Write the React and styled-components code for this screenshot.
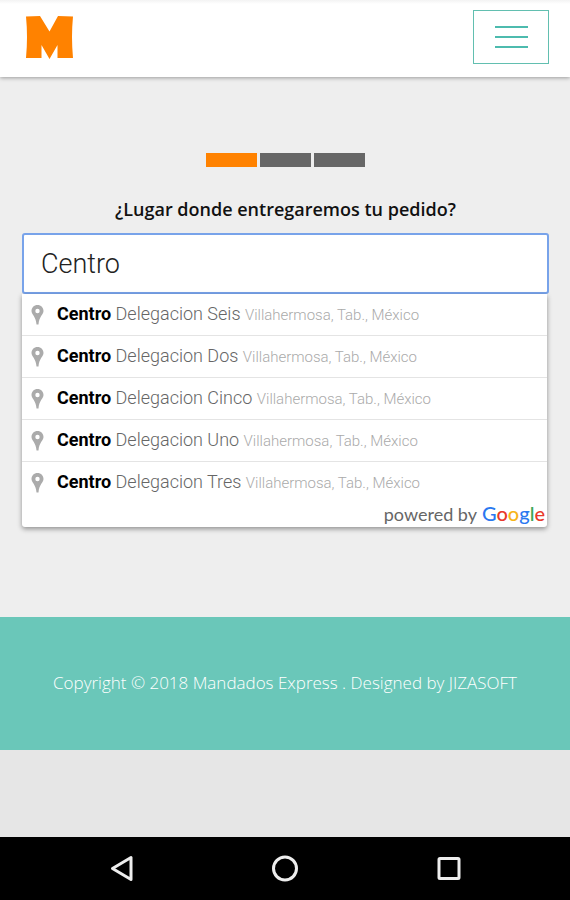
import React, { useState } from "react";
import styled, { createGlobalStyle } from "styled-components";

const places = [
    { id: 1, name: "Delegacion Seis", region: "Villahermosa, Tab., México" },
    { id: 2, name: "Delegacion Dos", region: "Villahermosa, Tab., México" },
    { id: 3, name: "Delegacion Cinco", region: "Villahermosa, Tab., México" },
    { id: 4, name: "Delegacion Uno", region: "Villahermosa, Tab., México" },
    { id: 5, name: "Delegacion Tres", region: "Villahermosa, Tab., México" }
];

const googleLetters = [
    ["G", "#2a78f0"],
    ["o", "#e8392b"],
    ["o", "#f7b518"],
    ["g", "#2a78f0"],
    ["l", "#3aa757"],
    ["e", "#e8392b"]
];

const steps = [1, 2, 3];

const Logo = () => (
    <svg width="48" height="44" viewBox="0 0 48 44" aria-hidden="true">
        <path
            d="M1 1.500L15 1L24.500 16.500L33 1L48 1.500Q47 12 47 22T48 43L32.500 43V30L24.500 44L16.500 30V43L1 43Q2 32 2 22T1 1.500Z"
            fill="#ff8200"
        />
    </svg>
);

const Pin = () => (
    <svg width="13" height="20" viewBox="0 0 13 20" aria-hidden="true">
        <path
            d="M6.500 0C2.900 0 0.500 2.700 0.500 6C0.500 9.500 5 11.500 5.500 19.500H7.500C8 11.500 12.500 9.500 12.500 6C12.500 2.700 10.100 0 6.500 0ZM6.500 3.800A2.200 2.200 0 1 1 6.500 8.200A2.200 2.200 0 1 1 6.500 3.800Z"
            fill="#ababab"
            fillRule="evenodd"
        />
    </svg>
);

const App = () => {
    const [query, setQuery] = useState("Centro");
    const currentStep = 1;

    return <Page>
        <GlobalStyle />
        <Header>
            <LogoLink href="#" aria-label="Mandados Express"><Logo /></LogoLink>
            <MenuButton type="button" aria-label="Menu">
                <MenuLine />
                <MenuLine />
                <MenuLine />
            </MenuButton>
        </Header>
        <Main>
            <Steps>
                {steps.map(step => <Step key={step} $active={step === currentStep} />)}
            </Steps>
            <Question htmlFor="place">¿Lugar donde entregaremos tu pedido?</Question>
            <PlaceInput
                id="place"
                type="text"
                autoComplete="off"
                value={query}
                onChange={e => setQuery(e.target.value)}
            />
            <Suggestions>
                <PlaceList>
                    {places.map(place => (
                        <PlaceItem key={place.id}>
                            <PlaceButton type="button">
                                <Pin />
                                <PlaceText>
                                    <b>Centro</b> {place.name} <small>{place.region}</small>
                                </PlaceText>
                            </PlaceButton>
                        </PlaceItem>
                    ))}
                </PlaceList>
                <PoweredBy>
                    powered by
                    <Google>
                        {googleLetters.map(([letter, color], index) => (
                            <Letter key={index} $color={color}>{letter}</Letter>
                        ))}
                    </Google>
                </PoweredBy>
            </Suggestions>
        </Main>
        <Footer>Copyright © 2018 Mandados Express . Designed by JIZASOFT</Footer>
        <SystemBar>
            <SystemButton type="button" aria-label="Back">
                <svg width="28" height="28" viewBox="0 0 28 28">
                    <path d="M24 2.500V24.500L5.500 13.500Z" />
                </svg>
            </SystemButton>
            <SystemButton type="button" aria-label="Home">
                <svg width="28" height="28" viewBox="0 0 28 28">
                    <circle cx="14" cy="13.500" r="11.500" />
                </svg>
            </SystemButton>
            <SystemButton type="button" aria-label="Recent apps">
                <svg width="28" height="28" viewBox="0 0 28 28">
                    <rect x="4" y="3.500" width="20" height="20" rx="1" />
                </svg>
            </SystemButton>
        </SystemBar>
    </Page>
};

const GlobalStyle = createGlobalStyle`
    * {
        box-sizing: border-box;
    }

    body {
        margin: 0;
        background: #e6e6e6;
        font-family: "Open Sans", sans-serif;
    }
`;

const Page = styled.div`
    display: flex;
    flex-direction: column;
    min-height: 100vh;
`;

const Header = styled.header`
    display: flex;
    align-items: center;
    justify-content: space-between;
    height: 77px;
    padding: 0 21px 4px 25px;
    background: linear-gradient(#f3f3f3, #fff 4px);
    box-shadow: 0 1px 4px rgba(0, 0, 0, 0.35);
    z-index: 1;
`;

const LogoLink = styled.a`
    display: flex;
`;

const MenuButton = styled.button`
    display: flex;
    flex-direction: column;
    align-items: center;
    justify-content: center;
    gap: 8px;
    width: 76px;
    height: 54px;
    padding: 0;
    background: #fff;
    border: 1px solid #62bfb0;
`;

const MenuLine = styled.span`
    width: 33px;
    height: 2px;
    background: #4dbbae;
`;

const Main = styled.main`
    display: flex;
    flex-direction: column;
    padding: 76px 21px 90px 22px;
    background: #eeeeee;
`;

const Steps = styled.div`
    display: flex;
    justify-content: center;
    gap: 3px;
`;

const Step = styled.span`
    width: 51px;
    height: 14px;
    background: ${props => props.$active ? "#ff8200" : "#666"};
`;

const Question = styled.label`
    padding: 30px 0 12px;
    color: #111;
    font-size: 18px;
    font-weight: 600;
    line-height: 24px;
    text-align: center;
`;

const PlaceInput = styled.input`
    width: 100%;
    height: 61px;
    padding: 0 17px;
    color: #222;
    background: #fff;
    border: 2px solid #78a3ea;
    border-radius: 3px;
    outline: none;
    font-family: Roboto, sans-serif;
    font-size: 27px;
    font-weight: 300;
`;

const Suggestions = styled.div`
    margin-right: 2px;
    background: #fff;
    border-radius: 0 0 3px 3px;
    box-shadow: 0 2px 5px rgba(0, 0, 0, 0.4);
`;

const PlaceList = styled.ul`
    margin: 0;
    padding: 0;
    list-style: none;
`;

const PlaceItem = styled.li`
    & + & {
        border-top: 1px solid #e4e4e4;
    }
`;

const PlaceButton = styled.button`
    display: flex;
    align-items: center;
    gap: 13px;
    width: 100%;
    height: 41px;
    padding: 0 9px;
    background: none;
    border: 0;
    text-align: left;
`;

const PlaceText = styled.span`
    color: #666;
    font-family: Roboto, sans-serif;
    font-size: 18px;
    font-weight: 300;
    line-height: 24px;

    b {
        color: #000;
        font-weight: 700;
    }

    small {
        color: #aaa;
        font-size: 15px;
    }
`;

const PoweredBy = styled.div`
    display: flex;
    align-items: baseline;
    justify-content: flex-end;
    gap: 5px;
    padding: 0 2px 3px;
    color: #666;
    font-family: Lato, sans-serif;
    font-size: 18px;
    line-height: 20px;
`;

const Google = styled.span`
    font-size: 20px;
    font-weight: 500;
`;

const Letter = styled.span`
    color: ${props => props.$color};
`;

const Footer = styled.footer`
    padding: 54px 20px 55px;
    color: #fff;
    background: #6ac7b9;
    font-size: 17px;
    font-weight: 300;
    line-height: 24px;
    text-align: center;
`;

const SystemBar = styled.nav`
    display: flex;
    align-items: center;
    justify-content: center;
    gap: 136px;
    height: 63px;
    margin-top: auto;
    background: #000;
`;

const SystemButton = styled.button`
    display: flex;
    padding: 0;
    background: none;
    border: 0;

    svg {
        fill: none;
        stroke: #eee;
        stroke-width: 3;
        stroke-linejoin: round;
    }
`;

export default App;
